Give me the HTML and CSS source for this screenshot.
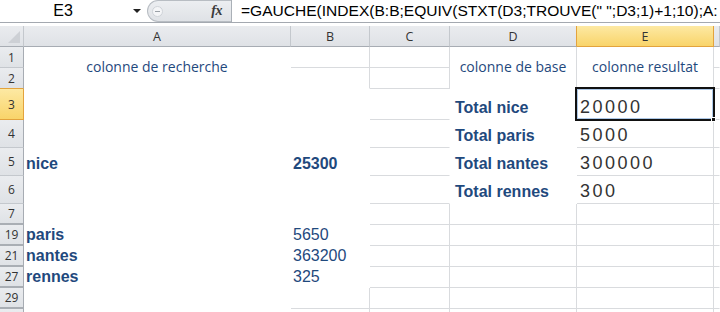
FILE: index.html
```html
<!DOCTYPE html>
<html>
<head>
<meta charset="utf-8">
<title>Feuille</title>
<link rel="stylesheet" href="styles.css">
</head>
<body>
<div class="app">
  <div class="fbar">
    <div class="namebox"><span class="ref">E3</span><span class="caret"></span></div>
    <div class="tools"><span class="grip"><span class="dash"></span></span><span class="fx">fx</span></div>
    <div class="formula">=GAUCHE(INDEX(B:B;EQUIV(STXT(D3;TROUVE(" ";D3;1)+1;10);A:</div>
  </div>
  <div class="spacer"></div>
  <div class="sheet">
    <div class="ch corner"><span class="tri"></span></div>
    <div class="ch">A</div>
    <div class="ch">B</div>
    <div class="ch">C</div>
    <div class="ch pre">D</div>
    <div class="ch sel">E</div>
    <div class="ch"></div>

    <div class="rh">1</div>
    <div class="c m2 ctr lbl">colonne de recherche</div>
    <div class="c bb br"></div>
    <div class="c bb br"></div>
    <div class="c m2 ctr lbl br">colonne de base</div>
    <div class="c m2 ctr lbl br bb">colonne resultat</div>
    <div class="c bb"></div>

    <div class="rh pre">2</div>
    <div class="c br"></div>
    <div class="c bb br"></div>
    <div class="c bb"></div>

    <div class="rh sel">3</div>
    <div class="c t"></div>
    <div class="c t"></div>
    <div class="c t bb"></div>
    <div class="c t b d">Total nice</div>
    <div class="c t bb br n cur">20000<span class="handle"></span></div>
    <div class="c t bb"></div>

    <div class="rh">4</div>
    <div class="c t"></div>
    <div class="c t"></div>
    <div class="c t bb"></div>
    <div class="c t b d">Total paris</div>
    <div class="c t bb br n">5000</div>
    <div class="c t bb"></div>

    <div class="rh">5</div>
    <div class="c t b a">nice</div>
    <div class="c t b v">25300</div>
    <div class="c t bb"></div>
    <div class="c t b d">Total nantes</div>
    <div class="c t bb br n">300000</div>
    <div class="c t bb"></div>

    <div class="rh">6</div>
    <div class="c t"></div>
    <div class="c t"></div>
    <div class="c t bb"></div>
    <div class="c t b d">Total rennes</div>
    <div class="c t bb br n">300</div>
    <div class="c t bb"></div>

    <div class="rh hid">7</div>
    <div class="c"></div>
    <div class="c"></div>
    <div class="c bb br"></div>
    <div class="c bb br"></div>
    <div class="c bb br"></div>
    <div class="c bb"></div>

    <div class="rh hid">19</div>
    <div class="c b a">paris</div>
    <div class="c v">5650</div>
    <div class="c bb br"></div>
    <div class="c bb br"></div>
    <div class="c bb br"></div>
    <div class="c bb"></div>

    <div class="rh hid">21</div>
    <div class="c b a">nantes</div>
    <div class="c v">363200</div>
    <div class="c bb br"></div>
    <div class="c bb br"></div>
    <div class="c bb br"></div>
    <div class="c bb"></div>

    <div class="rh hid">27</div>
    <div class="c b a">rennes</div>
    <div class="c v">325</div>
    <div class="c bb br"></div>
    <div class="c bb br"></div>
    <div class="c bb br"></div>
    <div class="c bb"></div>

    <div class="rh hid">29</div>
    <div class="c"></div>
    <div class="c bb br"></div>
    <div class="c bb br"></div>
    <div class="c bb br"></div>
    <div class="c bb br"></div>
    <div class="c bb"></div>

    <div class="rh"></div>
    <div class="c"></div>
    <div class="c br"></div>
    <div class="c br"></div>
    <div class="c br"></div>
    <div class="c br"></div>
    <div class="c"></div>
  </div>
</div>
</body>
</html>
```

FILE: styles.css
```css
* { box-sizing: border-box; margin: 0; padding: 0; }
html, body { width: 720px; height: 312px; overflow: hidden; background: #fff; }
body { font-family: "Liberation Sans", Arial, sans-serif; }

.app { width: 720px; height: 312px; overflow: hidden; }

/* formula bar */
.fbar { height: 23px; display: flex; border-bottom: 1px solid #a4a9b0; background: #fff; }
.namebox { width: 147px; display: flex; align-items: center; }
.ref { width: 126px; text-align: center; font-size: 16px; line-height: 22px; color: #000; }
.caret { margin-left: 7px; width: 0; height: 0; border-left: 4px solid transparent; border-right: 4px solid transparent; border-top: 4px solid #222; }
.tools { width: 84px; display: flex; align-items: center; background: linear-gradient(#eceef1, #dfe2e6); border: 1px solid #b8bdc3; border-right: none; border-radius: 11px 0 0 11px; }
.grip { width: 11px; height: 11px; margin-left: 4px; border-radius: 50%; background: #f4f5f7; border: 1px solid #cfd3d8; display: flex; align-items: center; justify-content: center; }
.dash { width: 5px; height: 1px; background: #9aa0a6; }
.fx { margin-left: auto; margin-right: 9px; font-family: "Liberation Serif", serif; font-style: italic; font-weight: bold; font-size: 14px; color: #3a3a3a; letter-spacing: -0.5px; }
.formula { flex: 1; min-width: 0; border-left: 1px solid #aab0b7; padding-left: 9px; font-size: 15.55px; line-height: 22px; color: #000; white-space: nowrap; overflow: hidden; }
.spacer { height: 3px; background: #fff; }

/* sheet */
.sheet { display: grid; grid-template-columns: 24px 267px 79px 80px 127px 137px 1fr; grid-template-rows: 21px 21px 21px 31px 28px 28px 28px 21px 21px 21px 21px 21px 21px; }

.ch, .rh { background: linear-gradient(#eaecef, #dfe2e6); color: #333; display: flex; align-items: center; justify-content: center; font-family: "Open Sans", sans-serif; }
.ch { font-size: 12.5px; border-right: 1px solid #c4c8cd; border-bottom: 1px solid #a7acb3; }
.rh { font-size: 12px; border-right: 1px solid #a7acb3; border-bottom: 1px solid #c4c8cd; }
.rh.hid { border-bottom: 2px solid #a9aeb4; }
.ch.pre { border-right-color: #e3a33d; }
.rh.pre { border-bottom-color: #e3a33d; }
.ch.sel, .rh.sel { background: linear-gradient(#fde9a3, #f9d46a); border-right-color: #e3a33d; border-bottom-color: #e3a33d; }
.corner { align-items: flex-end; justify-content: flex-end; padding: 0 3px 3px 0; }
.tri { width: 0; height: 0; border-left: 12px solid transparent; border-bottom: 12px solid #cdd0d5; }

.c { display: flex; align-items: flex-end; white-space: nowrap; color: #1f497d; font-size: 16px; line-height: 18px; padding: 0 0 1px 0; border-right: 1px solid transparent; border-bottom: 1px solid transparent; }
.c.t { padding-bottom: 2px; }
.bb { border-bottom-color: #d9dbde; }
.br { border-right-color: #d9dbde; }
.m2 { grid-row: span 2; }
.ctr { align-items: center; justify-content: center; padding: 0 0 2px 0; }
.lbl { font-family: "Open Sans", sans-serif; font-size: 14px; color: #1f497d; }
.b { font-weight: bold; }
.a { padding-left: 2px; }
.v { padding-left: 2px; }
.d { padding-left: 5px; }
.n { font-size: 18px; line-height: 20px; letter-spacing: 2.5px; color: #333; padding-left: 3px; }

.cur { position: relative; }
.cur::after { content: ""; position: absolute; left: -2px; top: -2px; right: -2px; bottom: -2px; border: 2px solid #111; box-shadow: inset 0 0 0 1px rgba(70, 130, 200, 0.45); }
.handle { position: absolute; right: -3px; bottom: -3px; width: 5px; height: 5px; background: #111; border: 1px solid #fff; z-index: 2; }
```
